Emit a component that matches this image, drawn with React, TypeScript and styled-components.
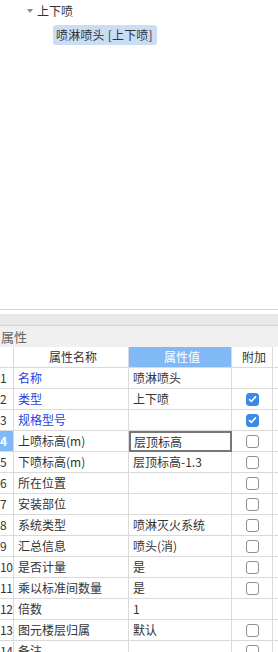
import React from "react";
import styled, { createGlobalStyle } from "styled-components";

const GlobalStyle = createGlobalStyle`
  html, body {
    margin: 0;
    padding: 0;
    background: #ffffff;
  }
  body {
    font-family: "Noto Sans CJK SC", "Microsoft YaHei", "Liberation Sans", sans-serif;
    font-size: 12px;
    color: #333;
  }
`;

const Page = styled.div`
  width: 278px;
  height: 652px;
  overflow: hidden;
  display: flex;
  flex-direction: column;
`;

const TreePanel = styled.div`
  height: 310px;
  flex-shrink: 0;
  border-bottom: 1px solid #d6d6d6;
  padding-top: 1px;
  box-sizing: border-box;
  display: flex;
  flex-direction: column;
  gap: 4px;
`;

const TreeRow = styled.div<{ $indent: number }>`
  display: flex;
  align-items: center;
  height: 20px;
  padding-left: ${(p) => p.$indent}px;
  line-height: 20px;
`;

const Caret = styled.span`
  width: 0;
  height: 0;
  border-left: 3px solid transparent;
  border-right: 3px solid transparent;
  border-top: 4px solid #8a8a8a;
  margin-right: 4px;
`;

const Selected = styled.span`
  background: #c9ddf4;
  border-radius: 3px;
  padding: 0 4px 0 3px;
  height: 20px;
  line-height: 20px;
  letter-spacing: 0.2px;
`;

const Gap = styled.div`
  height: 4px;
  flex-shrink: 0;
`;

const Band = styled.div`
  height: 11px;
  flex-shrink: 0;
  background: #e8e8e8;
  border-bottom: 1px solid #d2d2d2;
`;

const Title = styled.div`
  height: 21px;
  flex-shrink: 0;
  background: #f0f0f0;
  color: #666;
  font-size: 13px;
  line-height: 21px;
  padding-left: 1px;
`;

const Grid = styled.div`
  display: grid;
  grid-template-columns: 14px 115px 103px 41px 5px;
  grid-auto-rows: 21px;
`;

const Cell = styled.div<{ $head?: boolean; $active?: boolean; $blue?: boolean; $edit?: boolean }>`
  box-sizing: border-box;
  border-right: 1px solid #dadada;
  border-bottom: 1px solid #dadada;
  padding-left: 4px;
  line-height: 20px;
  white-space: nowrap;
  overflow: hidden;
  background: ${(p) => (p.$active ? "#80b9f6" : "#fff")};
  color: ${(p) => (p.$active ? "#fff" : p.$blue ? "#2443e0" : "#333")};
  text-align: ${(p) => (p.$head ? "center" : "left")};
  ${(p) => (p.$edit ? "border: 2px solid #777; line-height: 17px; padding-left: 3px;" : "")}
`;

const NumCell = styled(Cell)`
  padding-left: 0;
  padding-right: 0;
  text-align: left;
  letter-spacing: -0.5px;
  font-weight: ${(p) => (p.$active ? 600 : 400)};
`;

const BoxCell = styled(Cell)`
  display: flex;
  align-items: center;
  justify-content: center;
  padding-left: 0;
`;

const Filler = styled.div`
  border-bottom: 1px solid #dadada;
`;

const Check = styled.span<{ $on?: boolean }>`
  box-sizing: border-box;
  width: 13px;
  height: 13px;
  border-radius: 3px;
  border: 1px solid ${(p) => (p.$on ? "#3b8ae6" : "#8f8f8f")};
  background: ${(p) => (p.$on ? "#3b8ae6" : "#fff")};
  display: flex;
  align-items: center;
  justify-content: center;
`;

type Row = { name: string; value: string; blue?: boolean; box?: "on" | "off" };

const rows: Row[] = [
  { name: "名称", value: "喷淋喷头", blue: true },
  { name: "类型", value: "上下喷", blue: true, box: "on" },
  { name: "规格型号", value: "", blue: true, box: "on" },
  { name: "上喷标高(m)", value: "层顶标高", box: "off" },
  { name: "下喷标高(m)", value: "层顶标高-1.3", box: "off" },
  { name: "所在位置", value: "", box: "off" },
  { name: "安装部位", value: "", box: "off" },
  { name: "系统类型", value: "喷淋灭火系统", box: "off" },
  { name: "汇总信息", value: "喷头(消)", box: "off" },
  { name: "是否计量", value: "是", box: "off" },
  { name: "乘以标准间数量", value: "是", box: "off" },
  { name: "倍数", value: "1" },
  { name: "图元楼层归属", value: "默认", box: "off" },
  { name: "备注", value: "", box: "off" },
];

function Tick() {
  return (
    <svg width="9" height="8" viewBox="0 0 9 8">
      <path d="M1 4.2 L3.4 6.4 L8 1.4" fill="none" stroke="#fff" strokeWidth="1.6" />
    </svg>
  );
}

export default function App() {
  return (
    <Page>
      <GlobalStyle />
      <TreePanel>
        <TreeRow $indent={27}>
          <Caret />
          上下喷
        </TreeRow>
        <TreeRow $indent={53}>
          <Selected>喷淋喷头 [上下喷]</Selected>
        </TreeRow>
      </TreePanel>
      <Gap />
      <Band />
      <Title>属性</Title>
      <Grid>
        <Cell />
        <Cell $head>属性名称</Cell>
        <Cell $head $active>属性值</Cell>
        <Cell $head>附加</Cell>
        <Filler />
        {rows.map((r, i) => (
          <React.Fragment key={i}>
            <NumCell $active={i === 3}>{i + 1}</NumCell>
            <Cell $blue={r.blue}>{r.name}</Cell>
            <Cell $edit={i === 3}>{r.value}</Cell>
            <BoxCell>
              {r.box && <Check $on={r.box === "on"}>{r.box === "on" && <Tick />}</Check>}
            </BoxCell>
            <Filler />
          </React.Fragment>
        ))}
      </Grid>
    </Page>
  );
}
